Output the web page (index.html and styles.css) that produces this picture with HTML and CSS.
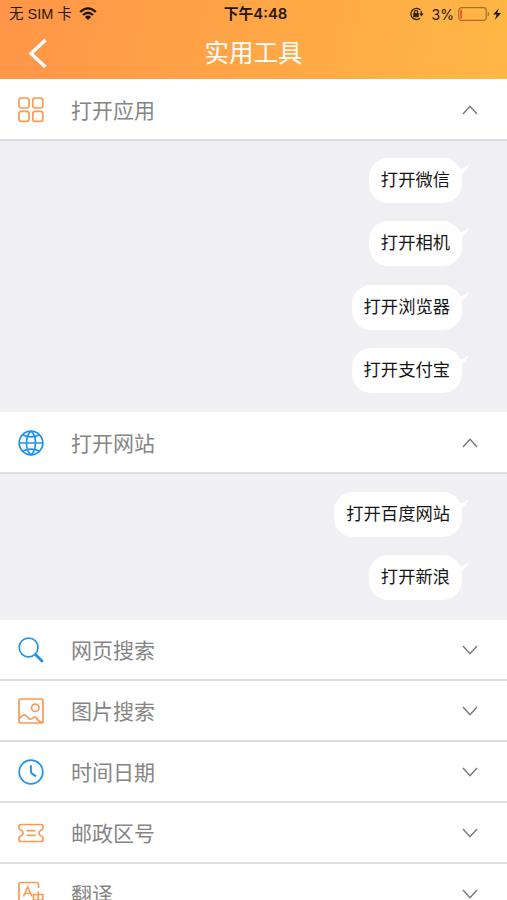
FILE: index.html
```html
<!DOCTYPE html>
<html lang="zh-CN">
<head>
    <meta charset="UTF-8">
    <meta name="viewport" content="width=device-width, initial-scale=1.0">
    <title>实用工具</title>
    <link rel="stylesheet" href="styles.css">
</head>
<body>
    <header>
        <div class="status-bar">
            <div class="status-left">
                <span class="carrier">无 SIM 卡</span>
                <svg class="wifi" width="18" height="14" viewBox="0 0 18 14">
                    <path d="M1.2 5Q9-2.2 16.8 5M4 8Q9 3.4 14 8" fill="none" stroke="#1f160b" stroke-width="2.3"/>
                    <path d="M5.9 9.9Q9 7 12.1 9.9L9 13z" fill="#1f160b"/>
                </svg>
            </div>
            <span class="time">下午4:48</span>
            <div class="status-right">
                <svg width="15" height="14" viewBox="0 0 15 14" fill="none" stroke="#33240f" stroke-width="1.3">
                    <path d="M11.6 3.1A5.6 5.6 0 1 0 11 11.3M12 4.2Q12.8 6 12.4 8"/>
                    <path d="M10.2 6.6h4.4l-2.2 2.9z" fill="#33240f" stroke="none"/>
                    <rect x="4.2" y="6" width="5.6" height="4.2" fill="#33240f" stroke="none"/>
                    <path d="M5.4 6V4.9a1.6 1.6 0 0 1 3.2 0V6"/>
                </svg>
                <span class="percent">3%</span>
                <svg class="battery" width="44" height="14" viewBox="0 0 44 14">
                    <rect x=".7" y=".7" width="27.5" height="12.6" rx="2.8" fill="none" stroke="#a4712f" stroke-width="1.2"/>
                    <rect x="2.2" y="2.6" width="1.8" height="8.8" fill="#ff4a2b"/>
                    <path d="M29.7 4.8q1.6.3 1.6 2.2t-1.6 2.2z" fill="#a4712f"/>
                    <path d="M40.8 1.2L35.2 7.6h3.5L36.8 13l6.3-6.9h-3.8z" fill="#1f160b"/>
                </svg>
            </div>
        </div>
        <div class="nav-bar">
            <svg class="back" width="20" height="30" viewBox="0 0 20 30">
                <path d="M17.5 2L3 15.5 17.5 29" fill="none" stroke="#fff" stroke-width="3.4"/>
            </svg>
            <h1>实用工具</h1>
        </div>
    </header>

    <main>
        <div class="row open">
            <svg class="icon orange" viewBox="0 0 26 26">
                <rect x="1" y="1" width="10" height="10" rx="2.4"/>
                <rect x="14.8" y="1" width="10" height="10" rx="2.4"/>
                <rect x="1" y="14.4" width="10" height="10" rx="2.4"/>
                <rect x="14.8" y="14.4" width="10" height="10" rx="2.4"/>
            </svg>
            <span>打开应用</span>
            <svg class="arrow" viewBox="0 0 16 10"><path d="M1 9l7-7.7L15 9"/></svg>
        </div>
        <div class="panel apps">
            <div class="bubble">打开微信<svg class="tail" viewBox="0 0 14 16"><path d="M0 5Q7 6 13 0Q10 6 5 10V14z"/></svg></div>
            <div class="bubble">打开相机<svg class="tail" viewBox="0 0 14 16"><path d="M0 5Q7 6 13 0Q10 6 5 10V14z"/></svg></div>
            <div class="bubble">打开浏览器<svg class="tail" viewBox="0 0 14 16"><path d="M0 5Q7 6 13 0Q10 6 5 10V14z"/></svg></div>
            <div class="bubble">打开支付宝<svg class="tail" viewBox="0 0 14 16"><path d="M0 5Q7 6 13 0Q10 6 5 10V14z"/></svg></div>
        </div>

        <div class="row open">
            <svg class="icon blue" viewBox="0 0 26 26">
                <circle cx="13" cy="13" r="11.8"/>
                <path d="M1.2 13h23.6M13 1.2C7 6 7 20 13 24.8M13 1.2C19 6 19 20 13 24.8M4.3 4.8Q13 9 21.7 4.8M4.3 21.2Q13 17 21.7 21.2"/>
            </svg>
            <span>打开网站</span>
            <svg class="arrow" viewBox="0 0 16 10"><path d="M1 9l7-7.7L15 9"/></svg>
        </div>
        <div class="panel sites">
            <div class="bubble">打开百度网站<svg class="tail" viewBox="0 0 14 16"><path d="M0 5Q7 6 13 0Q10 6 5 10V14z"/></svg></div>
            <div class="bubble">打开新浪<svg class="tail" viewBox="0 0 14 16"><path d="M0 5Q7 6 13 0Q10 6 5 10V14z"/></svg></div>
        </div>

        <div class="row">
            <svg class="icon blue" viewBox="0 0 26 26">
                <circle cx="10.6" cy="10.4" r="9.4"/>
                <path d="M16.8 17l1.8 1.8"/>
                <path d="M18 18l6 6" stroke-width="2.8" stroke-linecap="round"/>
            </svg>
            <span>网页搜索</span>
            <svg class="arrow" viewBox="0 0 16 10"><path d="M1 1l7 7.7L15 1"/></svg>
        </div>
        <div class="row">
            <svg class="icon orange" viewBox="0 0 26 26">
                <rect x="1" y="1" width="24" height="24" rx="2"/>
                <circle cx="17.3" cy="9.8" r="3.7"/>
                <path d="M1.5 20.5Q5 16 7 17T10.8 20.5Q13 22 15 20T18.5 20Q20.5 24 24.5 24.5"/>
            </svg>
            <span>图片搜索</span>
            <svg class="arrow" viewBox="0 0 16 10"><path d="M1 1l7 7.7L15 1"/></svg>
        </div>
        <div class="row">
            <svg class="icon blue" viewBox="0 0 26 26">
                <circle cx="13" cy="13" r="11.8"/>
                <path d="M12.9 6.2v6.6q0 1 .8 1.6l4.4 3" stroke-width="1.9"/>
            </svg>
            <span>时间日期</span>
            <svg class="arrow" viewBox="0 0 16 10"><path d="M1 1l7 7.7L15 1"/></svg>
        </div>
        <div class="row">
            <svg class="icon orange" viewBox="0 0 26 26">
                <path d="M3 4.5h20q2 0 2 2v1.500q0 1-1 1.500-3 1.500-3 3.500t3 3.500q1 .5 1 1.500v1.500q0 2-2 2H3q-2 0-2-2V18q0-1 1-1.500 3-1.500 3-3.500T2 9.500Q1 9 1 8V6.500q0-2 2-2z"/>
                <path d="M8.500 10.700h9M8.500 15.300h9"/>
            </svg>
            <span>邮政区号</span>
            <svg class="arrow" viewBox="0 0 16 10"><path d="M1 1l7 7.7L15 1"/></svg>
        </div>
        <div class="row">
            <svg class="icon orange" viewBox="0 0 26 26">
                <path d="M20.500 7V3.500q0-2-2-2H3q-2 0-2 2v20q0 2 2 2h12"/>
                <path d="M5.500 15.500L9.700 6l4.300 9.500M7 12.500h5.500"/>
                <path d="M15.500 13.500h9.300v5.500h-9.300zM20.200 10.500v14"/>
            </svg>
            <span>翻译</span>
            <svg class="arrow" viewBox="0 0 16 10"><path d="M1 1l7 7.7L15 1"/></svg>
        </div>
    </main>
</body>
</html>
```
FILE: styles.css
```css
* {
    box-sizing: border-box;
    margin: 0;
    padding: 0;
}

body {
    height: 900px;
    overflow: hidden;
    font-family: "Liberation Sans", "Noto Sans CJK SC", sans-serif;
    background: #efeff4;
}

svg {
    display: block;
    flex-shrink: 0;
}

header {
    height: 79px;
    background: linear-gradient(100deg, #ff9548, #ffb744);
}

/* Status bar */
.status-bar {
    display: grid;
    grid-template-columns: 1fr auto 1fr;
    align-items: center;
    height: 27px;
    padding: 0 5px 0 9px;
    font-size: 14px;
    line-height: 27px;
    color: #1f160b;
}

.status-left,
.status-right {
    display: flex;
    align-items: center;
}

.carrier {
    padding-top: 1px;
    font-size: 14.5px;
    white-space: nowrap;
}

.wifi {
    margin-left: 7px;
}

.time {
    font-family: Inter, "Noto Sans CJK SC", sans-serif;
    font-size: 14.8px;
    font-weight: 600;
}

.status-right {
    justify-content: flex-end;
}

.percent {
    margin: 0 4px 0 8px;
    font-family: Inter, sans-serif;
    font-size: 14px;
}

/* Navigation bar */
.nav-bar {
    display: grid;
    grid-template-columns: 60px 1fr 60px;
    align-items: center;
    height: 49px;
}

.back {
    margin-left: 28px;
}

h1 {
    padding-top: 2px;
    font-size: 24.5px;
    font-weight: 400;
    line-height: 49px;
    text-align: center;
    color: #fff;
}

/* List rows */
.row {
    display: flex;
    align-items: center;
    height: 61px;
    padding: 1px 29px 0 18px;
    background: #fff;
    border-bottom: 2px solid #dedee0;
}

.row.open {
    height: 62px;
    padding-top: 2px;
}

.row span {
    flex: 1;
    margin-left: 27px;
    padding-top: 1px;
    font-size: 21px;
    line-height: 30px;
    color: #858585;
}

.icon {
    width: 26px;
    height: 26px;
    fill: none;
    stroke-width: 1.7;
}

.orange {
    stroke: #f99b55;
}

.blue {
    stroke: #1c92ef;
}

.arrow {
    width: 16px;
    height: 10px;
    fill: none;
    stroke: #777;
    stroke-width: 1.4;
}

/* Expanded content */
.panel {
    display: flex;
    flex-direction: column;
    align-items: flex-end;
    gap: 18.3px;
    padding: 17px 45px 0 0;
}

.apps {
    height: 271px;
}

.sites {
    height: 146px;
    padding-top: 18px;
}

.bubble {
    position: relative;
    height: 45px;
    padding: 0 12px;
    border-radius: 19px;
    background: #fff;
    font-size: 17.3px;
    line-height: 45px;
    color: #161616;
}

.tail {
    position: absolute;
    top: 6px;
    right: -9px;
    width: 14px;
    height: 16px;
    fill: #fff;
}
```
